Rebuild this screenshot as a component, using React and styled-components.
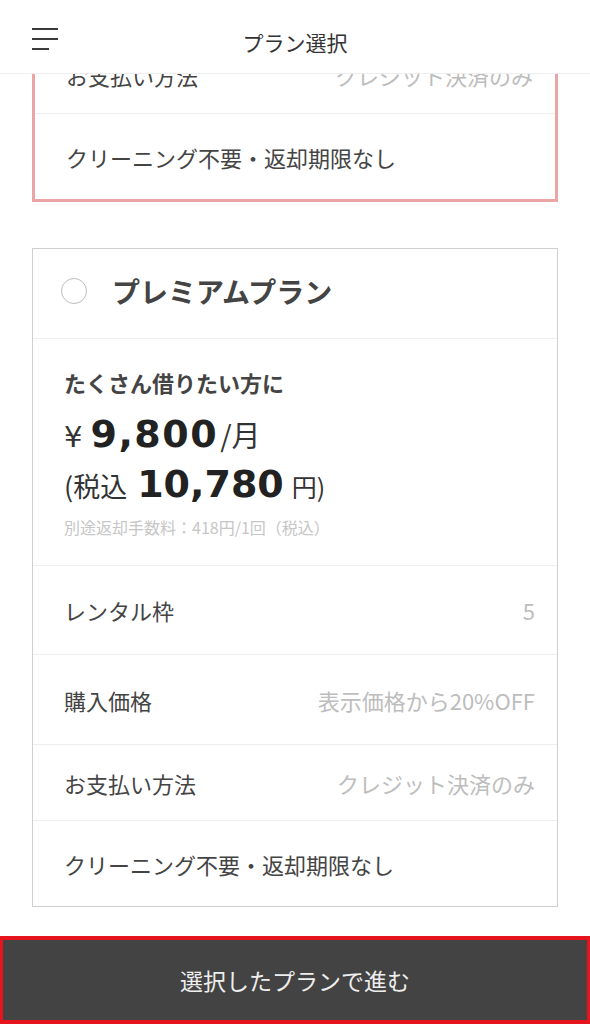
import styled, { createGlobalStyle } from "styled-components";

const GlobalStyle = createGlobalStyle`
  body {
    margin: 0;
    background: #fff;
    font-family: "Noto Sans CJK JP", "Noto Sans", sans-serif;
    color: #444;
  }
`;

// ヘッダー
const Header = styled.header`
  position: fixed;
  top: 0;
  left: 0;
  right: 0;
  height: 73px;
  background: #fff;
  border-bottom: 1px solid #eeeeee;
  z-index: 10;
  display: grid;
  grid-template-columns: 90px 1fr 90px;
  align-items: center;
`;

const MenuButton = styled.button`
  display: flex;
  flex-direction: column;
  gap: 8px;
  width: 26px;
  margin: 4px 0 0 32px;
  padding: 0;
  border: none;
  background: none;
`;

const MenuLine = styled.span`
  display: block;
  height: 2px;
  width: ${(p) => (p.short ? "17px" : "26px")};
  background: #3a3a3a;
`;

const HeaderTitle = styled.h1`
  margin: 0;
  padding-top: 10px;
  text-align: center;
  font-size: 21px;
  font-weight: 400;
  color: #333;
`;

// 本文
const Main = styled.main`
  padding: 34px 32px 140px;
  display: flex;
  flex-direction: column;
  gap: 46px;
`;

const PlanCard = styled.section`
  border: ${(p) => (p.selected ? "3px solid #eba5a5" : "1px solid #cfcfcf")};
  background: #fff;
`;

const CardHeader = styled.div`
  height: 90px;
  box-sizing: border-box;
  display: flex;
  align-items: center;
  gap: 25px;
  padding: 0 0 5px 28px;
  border-bottom: 1px solid #eeeeee;
`;

const Radio = styled.span`
  width: 24px;
  height: 24px;
  border-radius: 50%;
  border: 1.5px solid #bdbdbd;
  flex-shrink: 0;
`;

const PlanName = styled.h2`
  margin: 0;
  font-size: 28px;
  font-weight: 700;
  color: #444;
`;

const PriceBlock = styled.div`
  padding: 28px 31px 27px;
  border-bottom: 1px solid #eeeeee;
`;

const Catch = styled.p`
  margin: 0;
  font-size: 22px;
  line-height: 30px;
  font-weight: 700;
  color: #444;
`;

const PriceLine = styled.div`
  display: flex;
  align-items: baseline;
  height: 48px;
  line-height: 48px;
  margin-top: ${(p) => p.mt || 0}px;
  color: #333;
`;

const Small = styled.span`
  font-size: ${(p) => p.size || 29}px;
  margin-right: ${(p) => p.mr || 0}px;
  margin-left: ${(p) => p.ml || 0}px;
`;

const Yen = styled.span`
  font-family: "DejaVu Sans", sans-serif;
  font-size: 29px;
  margin-right: 8px;
`;

const Amount = styled.span`
  font-family: "DejaVu Sans", "Liberation Sans", sans-serif;
  font-weight: 700;
  font-size: 38px;
  letter-spacing: ${(p) => p.ls ?? 1.5}px;
  color: #222;
`;

const Note = styled.p`
  margin: 8px 0 0;
  font-size: 16px;
  line-height: 22px;
  color: #c6c6c6;
`;

const Row = styled.div`
  height: ${(p) => p.h}px;
  display: flex;
  align-items: center;
  justify-content: space-between;
  padding: 0 22px 0 31px;
  box-sizing: border-box;
  font-size: 22px;
  & + & {
    border-top: 1px solid #eeeeee;
  }
`;

const Label = styled.span`
  color: #444;
`;

const Value = styled.span`
  color: #bdbdbd;
`;

// 下部ボタン
const SubmitBar = styled.button`
  position: fixed;
  left: 0;
  right: 0;
  bottom: 0;
  height: 88px;
  width: 100%;
  box-sizing: border-box;
  border: 3px solid #e5141d;
  border-top-width: 4px;
  border-bottom-width: 4px;
  background: #434343;
  color: #eeeeee;
  font-family: "Noto Sans CJK JP", sans-serif;
  font-size: 23px;
  z-index: 10;
`;

const rows = [
  { label: "レンタル枠", value: "5", h: 88 },
  { label: "購入価格", value: "表示価格から20%OFF", h: 90 },
  { label: "お支払い方法", value: "クレジット決済のみ", h: 76 },
  { label: "クリーニング不要・返却期限なし", h: 86 },
];

export default function App() {
  return (
    <>
      <GlobalStyle />
      <Header>
        <MenuButton aria-label="menu">
          <MenuLine />
          <MenuLine />
          <MenuLine short />
        </MenuButton>
        <HeaderTitle>プラン選択</HeaderTitle>
        <span />
      </Header>

      <Main>
        <PlanCard selected>
          <Row h={76}>
            <Label>お支払い方法</Label>
            <Value>クレジット決済のみ</Value>
          </Row>
          <Row h={86}>
            <Label>クリーニング不要・返却期限なし</Label>
          </Row>
        </PlanCard>

        <PlanCard>
          <CardHeader>
            <Radio />
            <PlanName>プレミアムプラン</PlanName>
          </CardHeader>
          <PriceBlock>
            <Catch>たくさん借りたい方に</Catch>
            <PriceLine mt={13}>
              <Yen>¥</Yen>
              <Amount>9,800</Amount>
              <Small ml={2}>/月</Small>
            </PriceLine>
            <PriceLine mt={2}>
              <Small size={27} mr={10}>(税込</Small>
              <Amount ls={0}>10,780</Amount>
              <Small size={25} ml={8}>円)</Small>
            </PriceLine>
            <Note>別途返却手数料：418円/1回（税込）</Note>
          </PriceBlock>
          {rows.map((r) => (
            <Row key={r.label} h={r.h}>
              <Label>{r.label}</Label>
              {r.value && <Value>{r.value}</Value>}
            </Row>
          ))}
        </PlanCard>
      </Main>

      <SubmitBar>選択したプランで進む</SubmitBar>
    </>
  );
}
